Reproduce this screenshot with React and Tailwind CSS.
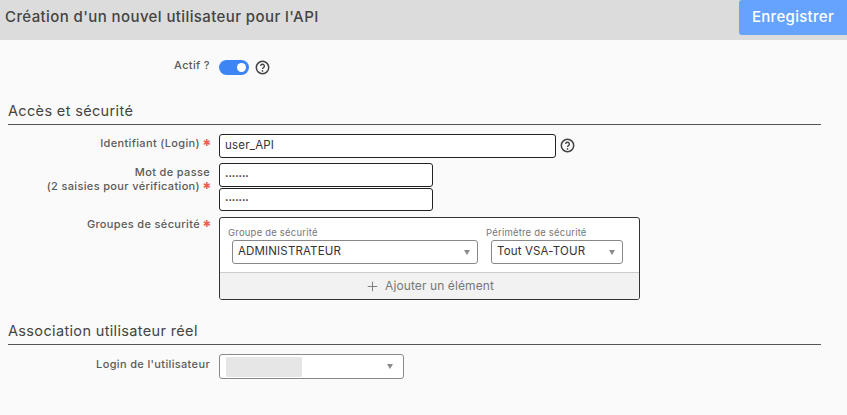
import React from 'react';
import { Plus } from 'lucide-react';

const HelpIcon = () => (
  <svg width="15" height="15" viewBox="0 0 16 16" fill="none" className="shrink-0">
    <circle cx="8" cy="8" r="6.6" stroke="#444" strokeWidth="1.6" />
    <path d="M6.1 6.5a1.95 1.95 0 1 1 2.9 1.7c-.7.4-1 .8-1 1.5" stroke="#444" strokeWidth="1.5" fill="none" />
    <circle cx="8" cy="11.6" r=".9" fill="#444" />
  </svg>
);

const Star = () => (
  <span className="inline-block w-[7px] ml-[3px] text-center font-['DejaVu_Sans',sans-serif] font-normal text-[#f0604d] text-[9.5px] leading-[10px] tracking-normal align-[1px]">✱</span>
);

const Arrow = () => (
  <svg width="6" height="5" viewBox="0 0 6 5" className="shrink-0"><path d="M0 0h6L3 5z" fill="#8a8a8a" /></svg>
);

const Label = ({ children, required }) => (
  <div className="w-[210px] shrink-0 text-right text-[11px] leading-[14px] font-medium text-[#5a5a5a] tracking-[0.35px]">
    {children}
    {required && <Star />}
  </div>
);

const SectionTitle = ({ children }) => (
  <h2 className="mx-[8px] mr-[26px] border-b border-[#555] text-[14.5px] leading-[20px] pb-[3px] text-[#444] tracking-[0.35px]">{children}</h2>
);

const Select = ({ value, className }) => (
  <div className={`h-[24px] bg-white border border-[#888] rounded-[3px] flex items-center justify-between pl-[5px] pr-[7px] text-[11.5px] tracking-[0.15px] text-[#333] ${className}`}>
    {value}
    <Arrow />
  </div>
);

const App = () => {
  return (
    <div className="w-[847px] h-[415px] bg-[#fafafa] overflow-hidden font-['Inter','Liberation_Sans',sans-serif]">
      <header className="h-[40px] bg-[#dcdcdc] flex justify-between items-start">
        <h1 className="ml-[5px] mt-[8px] text-[15px] leading-[18px] font-medium text-[#444] tracking-[0.4px]">
          Création d'un nouvel utilisateur pour l'API
        </h1>
        <button className="w-[108px] h-[35px] bg-[#66a3ff] text-white rounded-l-[3px] text-[15px] font-medium tracking-[0.3px]">
          Enregistrer
        </button>
      </header>

      <div className="flex pt-[18px] h-[61px]">
        <Label>Actif ?</Label>
        <div className="ml-[9px] mt-[2px] flex items-start gap-[6px]">
          <div className="w-[30px] h-[15px] rounded-full bg-[#3d85f5] flex items-center justify-end pr-[3px]">
            <div className="w-[9px] h-[9px] rounded-full bg-white" />
          </div>
          <HelpIcon />
        </div>
      </div>

      <SectionTitle>Accès et sécurité</SectionTitle>

      <div className="flex mt-[9px]">
        <div className="pt-[2px]"><Label required>Identifiant (Login)</Label></div>
        <div className="ml-[9px] w-[337px] h-[24px] bg-white border border-[#222] rounded-[3px] flex items-center pl-[5px] text-[11.5px] tracking-[0.2px] text-[#333]">user_API</div>
        <div className="ml-[4px] mt-[4px]"><HelpIcon /></div>
      </div>

      <div className="flex mt-[5px]">
        <div className="pt-[2px]">
          <Label required>Mot de passe<br />(2 saisies pour vérification)</Label>
        </div>
        <div className="ml-[9px] flex flex-col gap-[1px]">
          <div className="w-[214px] h-[24px] bg-white border border-[#222] rounded-[3px] flex items-center pl-[5px] text-[6px] text-[#333]">•••••••</div>
          <div className="w-[214px] h-[23px] bg-white border border-[#222] rounded-[3px] flex items-center pl-[5px] text-[6px] text-[#333]">•••••••</div>
        </div>
      </div>

      <div className="flex mt-[6px]">
        <Label required>Groupes de sécurité</Label>
        <div className="ml-[9px] w-[421px] h-[83px] bg-white border border-[#333] rounded-[3px] overflow-hidden flex flex-col">
          <div className="flex h-[54px] pt-[9px] pl-[8px] gap-[8px]">
            <div>
              <div className="text-[9.5px] leading-[12px] text-[#777] tracking-[0.2px]">Groupe de sécurité</div>
              <Select value="ADMINISTRATEUR" className="w-[246px] ml-[4px] mt-[1px]" />
            </div>
            <div>
              <div className="text-[9.5px] leading-[12px] text-[#777] tracking-[0.2px]">Périmètre de sécurité</div>
              <Select value="Tout VSA-TOUR" className="w-[132px] ml-[5px] mt-[1px]" />
            </div>
          </div>
          <div className="flex-1 bg-[#f2f2f2] border-t border-[#ccc] flex items-center justify-center gap-[5px] text-[12px] tracking-[0.1px] text-[#777]">
            <Plus size={15} strokeWidth={1.5} />
            Ajouter un élément
          </div>
        </div>
      </div>

      <div className="mt-[21px]"><SectionTitle>Association utilisateur réel</SectionTitle></div>

      <div className="flex mt-[9px]">
        <div className="pt-[3px]"><Label>Login de l'utilisateur</Label></div>
        <div className="ml-[9px] w-[185px] h-[25px] bg-white border border-[#888] rounded-[3px] flex items-center justify-between pl-[6px] pr-[10px]">
          <div className="w-[76px] h-[20px] bg-[#e6e6e6]" />
          <Arrow />
        </div>
      </div>
    </div>
  );
};

export default App;
